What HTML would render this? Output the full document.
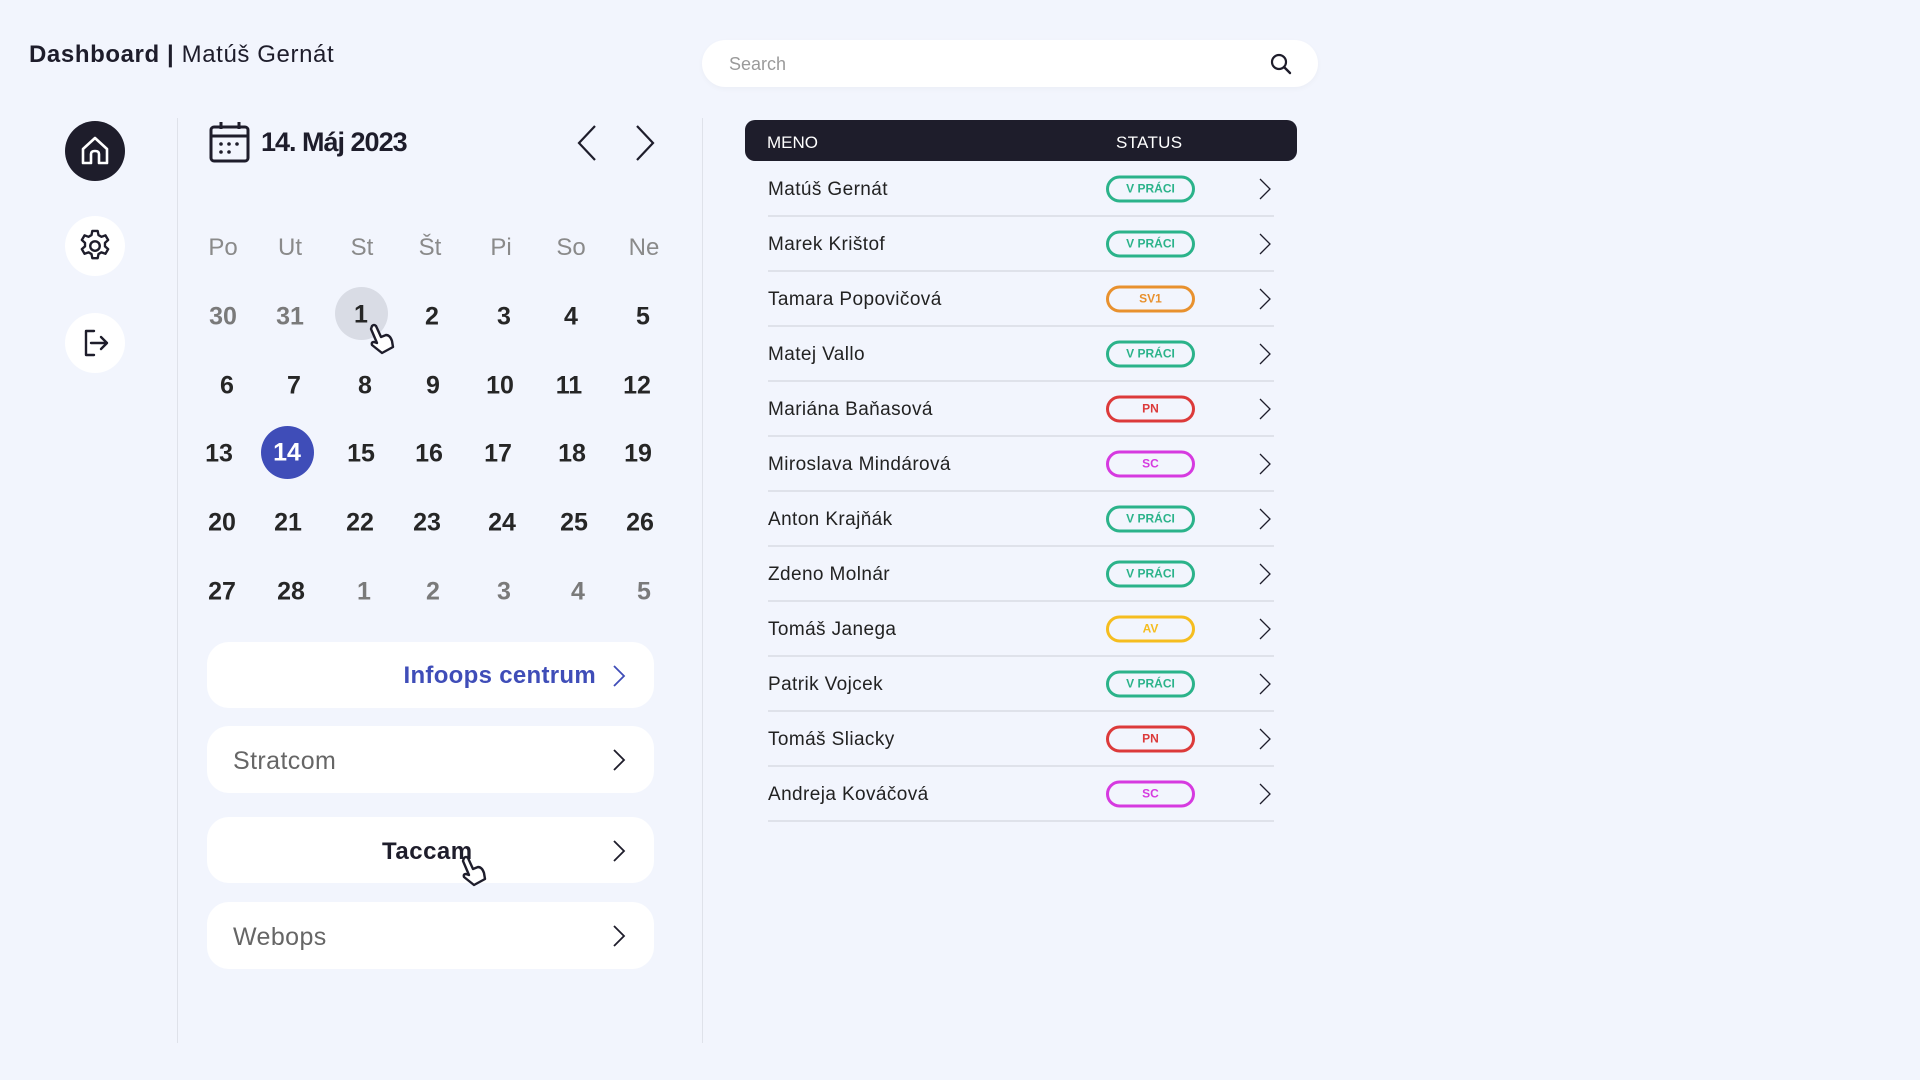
<!DOCTYPE html>
<html><head><meta charset="utf-8"><style>
*{margin:0;padding:0;box-sizing:border-box}
body{width:1920px;height:1080px;background:#f2f5fd;font-family:"Liberation Sans",sans-serif;position:relative;overflow:hidden;color:#1e1d2b}
.a{position:absolute}
.t{position:absolute;transform:translate(-50%,-50%);white-space:nowrap}
.n{font-weight:bold;font-size:25px;color:#262626}
.g{color:#7a7a7a}
.wd{font-size:24px;color:#8a8a8a}
.circ{position:absolute;width:60px;height:60px;border-radius:50%;background:#fff;display:flex;align-items:center;justify-content:center}
.btn{position:absolute;left:207px;width:447px;background:#fff;border-radius:22px}
.row{position:absolute;left:768px;width:506px;height:55px;border-bottom:2px solid #dfe2ea}
.nm{position:absolute;left:0;top:50%;transform:translateY(-45%);font-size:19px;color:#222;letter-spacing:0.4px}
.bd{position:absolute;left:338px;top:50%;transform:translateY(-50%);width:89px;height:27px;border:3px solid;border-radius:14px;font-size:12px;font-weight:bold;display:flex;align-items:center;justify-content:center}
.ch{position:absolute;left:490px;top:50%;transform:translateY(-50%)}
</style></head><body>
<div class="a" style="left:29px;top:40px;font-size:24px;line-height:30px;letter-spacing:0.6px"><b>Dashboard</b> <b>|</b> Matúš Gernát</div>

<div class="a" style="left:702px;top:40px;width:616px;height:47px;background:#fff;border-radius:24px;box-shadow:0 2px 6px rgba(0,0,0,0.03)">
<span class="a" style="left:27px;top:14px;font-size:18px;color:#9a9a9a">Search</span>
<svg class="a" style="left:567px;top:12px" width="24" height="24" viewBox="0 0 24 24"><circle cx="10" cy="10" r="7" fill="none" stroke="#1e1d2b" stroke-width="2.2"/><line x1="15" y1="15" x2="21" y2="21" stroke="#1e1d2b" stroke-width="2.4" stroke-linecap="round"/></svg>
</div>

<div class="circ" style="left:65px;top:121px;background:#1e1d2b">
<svg width="36" height="36" viewBox="0 0 36 36"><path d="M6 16 L18 5 L30 16 V30 H22 V21 Q22 18 18 18 Q14 18 14 21 V30 H6 Z" fill="none" stroke="#fff" stroke-width="2.6" stroke-linejoin="round"/></svg></div>
<div class="circ" style="left:65px;top:216px">
<svg width="38" height="38" viewBox="0 0 24 24" fill="none" stroke="#1e1d2b" stroke-width="1.5" stroke-linejoin="round"><circle cx="12" cy="12" r="3"/><path d="M10.3 2.5h3.4l.5 2.6 1.9 1.1 2.5-.9 1.7 2.9-2 1.8v2.2l2 1.8-1.7 2.9-2.5-.9-1.9 1.1-.5 2.6h-3.4l-.5-2.6-1.9-1.1-2.5.9-1.7-2.9 2-1.8v-2.2l-2-1.8 1.7-2.9 2.5.9 1.9-1.1z"/></svg></div>
<div class="circ" style="left:65px;top:313px">
<svg width="36" height="36" viewBox="0 0 36 36" fill="none" stroke="#1e1d2b" stroke-width="2.4" stroke-linecap="round" stroke-linejoin="round"><path d="M17 6 H9 V30 H17"/><path d="M14 18 H30 M24 12 L30 18 L24 24"/></svg></div>

<div class="a" style="left:177px;top:118px;width:1px;height:925px;background:#dfe2ea"></div>
<div class="a" style="left:702px;top:118px;width:1px;height:925px;background:#dfe2ea"></div>

<svg class="a" style="left:208px;top:120px" width="44" height="44" viewBox="0 0 44 44" fill="none" stroke="#1e1d2b" stroke-width="3"><rect x="3" y="7" width="37" height="34" rx="3"/><line x1="3" y1="16" x2="40" y2="16"/><line x1="13" y1="2" x2="13" y2="9"/><line x1="31" y1="2" x2="31" y2="9"/><g fill="#1e1d2b" stroke="none"><circle cx="13" cy="24" r="1.8"/><circle cx="21" cy="24" r="1.8"/><circle cx="29" cy="24" r="1.8"/><circle cx="13" cy="32" r="1.8"/><circle cx="21" cy="32" r="1.8"/></g></svg>
<div class="a" style="left:261px;top:127px;font-size:27px;font-weight:bold;letter-spacing:-1px">14. Máj 2023</div>
<svg class="a" style="left:575px;top:124px" width="24" height="38" viewBox="0 0 24 38"><path d="M20 2 L4 19 L20 36" fill="none" stroke="#1e1d2b" stroke-width="2.2"/></svg>
<svg class="a" style="left:633px;top:124px" width="24" height="38" viewBox="0 0 24 38"><path d="M4 2 L20 19 L4 36" fill="none" stroke="#1e1d2b" stroke-width="2.2"/></svg>

<div class="t wd" style="left:223px;top:248px">Po</div>
<div class="t wd" style="left:290px;top:248px">Ut</div>
<div class="t wd" style="left:362px;top:248px">St</div>
<div class="t wd" style="left:430px;top:248px">Št</div>
<div class="t wd" style="left:501px;top:248px">Pi</div>
<div class="t wd" style="left:571px;top:248px">So</div>
<div class="t wd" style="left:644px;top:248px">Ne</div>

<div class="a" style="left:335px;top:287px;width:53px;height:53px;border-radius:50%;background:#d9dce5"></div>
<div class="a" style="left:261px;top:426px;width:53px;height:53px;border-radius:50%;background:#3f4db8"></div>

<div class="t n g" style="left:223px;top:317px">30</div><div class="t n g" style="left:290px;top:317px">31</div><div class="t n" style="left:361px;top:315px">1</div><div class="t n" style="left:432px;top:317px">2</div><div class="t n" style="left:504px;top:317px">3</div><div class="t n" style="left:571px;top:317px">4</div><div class="t n" style="left:643px;top:317px">5</div>
<div class="t n" style="left:227px;top:386px">6</div><div class="t n" style="left:294px;top:386px">7</div><div class="t n" style="left:365px;top:386px">8</div><div class="t n" style="left:433px;top:386px">9</div><div class="t n" style="left:500px;top:386px">10</div><div class="t n" style="left:569px;top:386px">11</div><div class="t n" style="left:637px;top:386px">12</div>
<div class="t n" style="left:219px;top:454px">13</div><div class="t n" style="left:287px;top:453px;color:#fff">14</div><div class="t n" style="left:361px;top:454px">15</div><div class="t n" style="left:429px;top:454px">16</div><div class="t n" style="left:498px;top:454px">17</div><div class="t n" style="left:572px;top:454px">18</div><div class="t n" style="left:638px;top:454px">19</div>
<div class="t n" style="left:222px;top:523px">20</div><div class="t n" style="left:288px;top:523px">21</div><div class="t n" style="left:360px;top:523px">22</div><div class="t n" style="left:427px;top:523px">23</div><div class="t n" style="left:502px;top:523px">24</div><div class="t n" style="left:574px;top:523px">25</div><div class="t n" style="left:640px;top:523px">26</div>
<div class="t n" style="left:222px;top:592px">27</div><div class="t n" style="left:291px;top:592px">28</div><div class="t n g" style="left:364px;top:592px">1</div><div class="t n g" style="left:433px;top:592px">2</div><div class="t n g" style="left:504px;top:592px">3</div><div class="t n g" style="left:578px;top:592px">4</div><div class="t n g" style="left:644px;top:592px">5</div>

<svg class="a" style="left:366px;top:323px" width="30" height="34" viewBox="0 0 30 34"><path d="M6 3 Q8 1 10 3 L15 14 L20 12 Q24 12 26 18 L27 24 L16 30 L6 22 Q5 19 8 19 L11 20 L5 6 Z" fill="#fff" stroke="#1e1d2b" stroke-width="2.4" stroke-linejoin="round"/></svg>

<div class="btn" style="top:642px;height:66px"><span class="a" style="right:58px;top:20px;font-size:24px;font-weight:bold;color:#3f4db8;letter-spacing:0.3px">Infoops centrum</span><svg class="a" style="left:405px;top:22px" width="14" height="24" viewBox="0 0 14 24"><path d="M2 2 L12 12 L2 22" fill="none" stroke="#3f4db8" stroke-width="1.8"/></svg></div>
<div class="btn" style="top:726px;height:67px"><span class="a" style="left:26px;top:21px;font-size:25px;color:#666;letter-spacing:0.4px">Stratcom</span><svg class="a" style="left:405px;top:22px" width="14" height="24" viewBox="0 0 14 24"><path d="M2 2 L12 12 L2 22" fill="none" stroke="#1e1d2b" stroke-width="1.8"/></svg></div>
<div class="btn" style="top:817px;height:66px"><span class="a" style="left:175px;top:21px;font-size:24px;font-weight:bold;color:#1e1d2b;letter-spacing:0.5px">Taccam</span><svg class="a" style="left:405px;top:22px" width="14" height="24" viewBox="0 0 14 24"><path d="M2 2 L12 12 L2 22" fill="none" stroke="#1e1d2b" stroke-width="1.8"/></svg></div>
<div class="btn" style="top:902px;height:67px"><span class="a" style="left:26px;top:21px;font-size:25px;color:#666;letter-spacing:0.4px">Webops</span><svg class="a" style="left:405px;top:22px" width="14" height="24" viewBox="0 0 14 24"><path d="M2 2 L12 12 L2 22" fill="none" stroke="#1e1d2b" stroke-width="1.8"/></svg></div>
<svg class="a" style="left:458px;top:855px" width="30" height="34" viewBox="0 0 30 34"><path d="M6 3 Q8 1 10 3 L15 14 L20 12 Q24 12 26 18 L27 24 L16 30 L6 22 Q5 19 8 19 L11 20 L5 6 Z" fill="#fff" stroke="#1e1d2b" stroke-width="2.4" stroke-linejoin="round"/></svg>

<div class="a" style="left:745px;top:120px;width:552px;height:41px;background:#1e1d2b;border-radius:10px;color:#fff;font-size:17px">
<span class="a" style="left:22px;top:13px">MENO</span><span class="a" style="left:371px;top:13px;letter-spacing:0.3px">STATUS</span></div>

<div class="row" style="top:162px"><span class="nm">Matúš Gernát</span><span class="bd" style="color:#2bb38a">V PRÁCI</span><svg class="ch" width="14" height="24" viewBox="0 0 14 24"><path d="M2 2 L12 12 L2 22" fill="none" stroke="#1e1d2b" stroke-width="1.3"/></svg></div>
<div class="row" style="top:217px"><span class="nm">Marek Krištof</span><span class="bd" style="color:#2bb38a">V PRÁCI</span><svg class="ch" width="14" height="24" viewBox="0 0 14 24"><path d="M2 2 L12 12 L2 22" fill="none" stroke="#1e1d2b" stroke-width="1.3"/></svg></div>
<div class="row" style="top:272px"><span class="nm">Tamara Popovičová</span><span class="bd" style="color:#e8912e">SV1</span><svg class="ch" width="14" height="24" viewBox="0 0 14 24"><path d="M2 2 L12 12 L2 22" fill="none" stroke="#1e1d2b" stroke-width="1.3"/></svg></div>
<div class="row" style="top:327px"><span class="nm">Matej Vallo</span><span class="bd" style="color:#2bb38a">V PRÁCI</span><svg class="ch" width="14" height="24" viewBox="0 0 14 24"><path d="M2 2 L12 12 L2 22" fill="none" stroke="#1e1d2b" stroke-width="1.3"/></svg></div>
<div class="row" style="top:382px"><span class="nm">Mariána Baňasová</span><span class="bd" style="color:#dc3a3a">PN</span><svg class="ch" width="14" height="24" viewBox="0 0 14 24"><path d="M2 2 L12 12 L2 22" fill="none" stroke="#1e1d2b" stroke-width="1.3"/></svg></div>
<div class="row" style="top:437px"><span class="nm">Miroslava Mindárová</span><span class="bd" style="color:#d63ae0">SC</span><svg class="ch" width="14" height="24" viewBox="0 0 14 24"><path d="M2 2 L12 12 L2 22" fill="none" stroke="#1e1d2b" stroke-width="1.3"/></svg></div>
<div class="row" style="top:492px"><span class="nm">Anton Krajňák</span><span class="bd" style="color:#2bb38a">V PRÁCI</span><svg class="ch" width="14" height="24" viewBox="0 0 14 24"><path d="M2 2 L12 12 L2 22" fill="none" stroke="#1e1d2b" stroke-width="1.3"/></svg></div>
<div class="row" style="top:547px"><span class="nm">Zdeno Molnár</span><span class="bd" style="color:#2bb38a">V PRÁCI</span><svg class="ch" width="14" height="24" viewBox="0 0 14 24"><path d="M2 2 L12 12 L2 22" fill="none" stroke="#1e1d2b" stroke-width="1.3"/></svg></div>
<div class="row" style="top:602px"><span class="nm">Tomáš Janega</span><span class="bd" style="color:#f5bd1f">AV</span><svg class="ch" width="14" height="24" viewBox="0 0 14 24"><path d="M2 2 L12 12 L2 22" fill="none" stroke="#1e1d2b" stroke-width="1.3"/></svg></div>
<div class="row" style="top:657px"><span class="nm">Patrik Vojcek</span><span class="bd" style="color:#2bb38a">V PRÁCI</span><svg class="ch" width="14" height="24" viewBox="0 0 14 24"><path d="M2 2 L12 12 L2 22" fill="none" stroke="#1e1d2b" stroke-width="1.3"/></svg></div>
<div class="row" style="top:712px"><span class="nm">Tomáš Sliacky</span><span class="bd" style="color:#dc3a3a">PN</span><svg class="ch" width="14" height="24" viewBox="0 0 14 24"><path d="M2 2 L12 12 L2 22" fill="none" stroke="#1e1d2b" stroke-width="1.3"/></svg></div>
<div class="row" style="top:767px"><span class="nm">Andreja Kováčová</span><span class="bd" style="color:#d63ae0">SC</span><svg class="ch" width="14" height="24" viewBox="0 0 14 24"><path d="M2 2 L12 12 L2 22" fill="none" stroke="#1e1d2b" stroke-width="1.3"/></svg></div>
</body></html>
